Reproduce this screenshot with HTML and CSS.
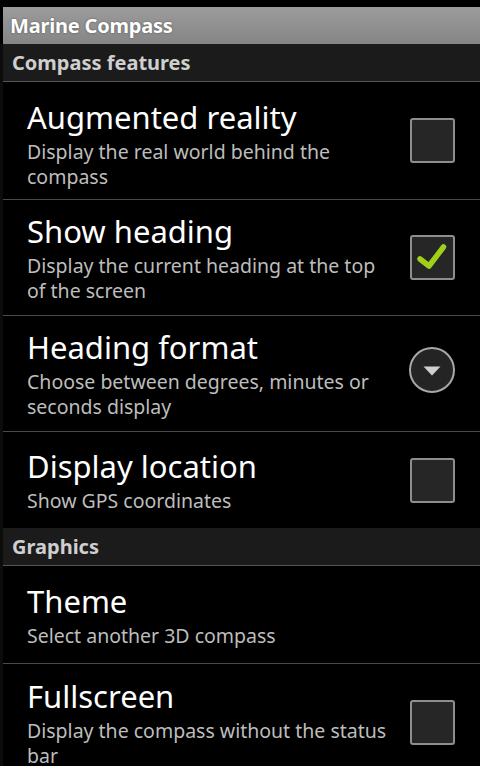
FILE: index.html
```html
<!DOCTYPE html>
<html>
<head>
<meta charset="utf-8">
<link rel="stylesheet" href="styles.css">
</head>
<body>
<div class="screen">
  <div class="status"></div>
  <div class="titlebar">Marine Compass</div>
  <div class="list">
    <div class="category">Compass features</div>
    <div class="pref first">
      <div class="texts">
        <div class="title">Augmented reality</div>
        <div class="summary">Display the real world behind the compass</div>
      </div>
      <div class="checkbox"></div>
    </div>
    <div class="pref tall">
      <div class="texts">
        <div class="title">Show heading</div>
        <div class="summary">Display the current heading at the top of the screen</div>
      </div>
      <div class="checkbox">
        <svg viewBox="0 0 45 45" width="45" height="45"><path d="M10 24 L19 31 L33.5 12" fill="none" stroke="#9fd11b" stroke-width="5.5" stroke-linecap="round" stroke-linejoin="round"/></svg>
      </div>
    </div>
    <div class="pref tall">
      <div class="texts">
        <div class="title">Heading format</div>
        <div class="summary">Choose between degrees, minutes or seconds display</div>
      </div>
      <div class="dropdown">
        <svg viewBox="0 0 48 48" width="48" height="48"><circle cx="24" cy="24" r="22" fill="#242424" stroke="#a8a8a8" stroke-width="2"/><path d="M15.5 20.5 L32.5 20.5 L24 29.5 Z" fill="#cfcfcf"/></svg>
      </div>
    </div>
    <div class="pref short last-in-group">
      <div class="texts">
        <div class="title">Display location</div>
        <div class="summary">Show GPS coordinates</div>
      </div>
      <div class="checkbox"></div>
    </div>
    <div class="category">Graphics</div>
    <div class="pref theme">
      <div class="texts">
        <div class="title">Theme</div>
        <div class="summary">Select another 3D compass</div>
      </div>
    </div>
    <div class="pref tall final">
      <div class="texts">
        <div class="title">Fullscreen</div>
        <div class="summary">Display the compass without the status bar</div>
      </div>
      <div class="checkbox"></div>
    </div>
  </div>
</div>
</body>
</html>
```

FILE: styles.css
```css
html, body {
  margin: 0;
  padding: 0;
  background: #000;
  overflow: hidden;
}
.screen {
  width: 480px;
  height: 766px;
  font-family: "Noto Sans", "Open Sans", sans-serif;
  background: #000;
  display: flex;
  flex-direction: column;
  overflow: hidden;
}
.status {
  height: 7px;
  flex: none;
  background: #000;
}
.titlebar {
  flex: none;
  height: 37px;
  box-sizing: border-box;
  margin-left: 3px;
  padding-left: 7px;
  background: linear-gradient(#9c9c9c, #858585);
  color: #fff;
  font-weight: bold;
  font-size: 20px;
  letter-spacing: -0.2px;
  line-height: 37px;
  text-shadow: 0 0 2px rgba(0,0,0,0.45);
}
.list {
  flex: 1;
  border-left: 3px solid #0c0c0c;
  display: flex;
  flex-direction: column;
}
.category {
  flex: none;
  height: 38px;
  box-sizing: border-box;
  background: #1b1b1b;
  border-bottom: 1px solid #555;
  color: #cfcfcf;
  font-weight: bold;
  font-size: 20px;
  line-height: 37px;
  padding-left: 9px;
}
.pref {
  flex: none;
  box-sizing: border-box;
  display: flex;
  align-items: center;
  padding: 0 24px 0 24px;
  border-bottom: 1px solid #4a4a4a;
}
.pref.first { height: 118px; padding-top: 6px; }
.pref.tall { height: 116px; }
.pref.short { height: 96px; }
.pref.last-in-group { border-bottom: none; }
.pref.theme { height: 98px; }
.pref.final { border-bottom: none; }
.texts {
  flex: 1;
  min-width: 0;
  padding-right: 16px;
}
.title {
  color: #fff;
  font-size: 31px;
  line-height: 38px;
}
.summary {
  color: #bdbdbd;
  font-size: 19.5px;
  line-height: 25px;
  margin-top: 3px;
}
.checkbox {
  flex: none;
  width: 45px;
  height: 45px;
  box-sizing: border-box;
  border: 2px solid #8e8e8e;
  border-radius: 3px;
  background: #262626;
  position: relative;
  margin-right: 1px;
}
.pref.first .checkbox { margin-top: -6px; }
.checkbox svg {
  position: absolute;
  left: -2px;
  top: -2px;
}
.dropdown {
  flex: none;
  width: 48px;
  height: 48px;
  margin-bottom: 7px;
}
.dropdown svg { display: block; }
```
